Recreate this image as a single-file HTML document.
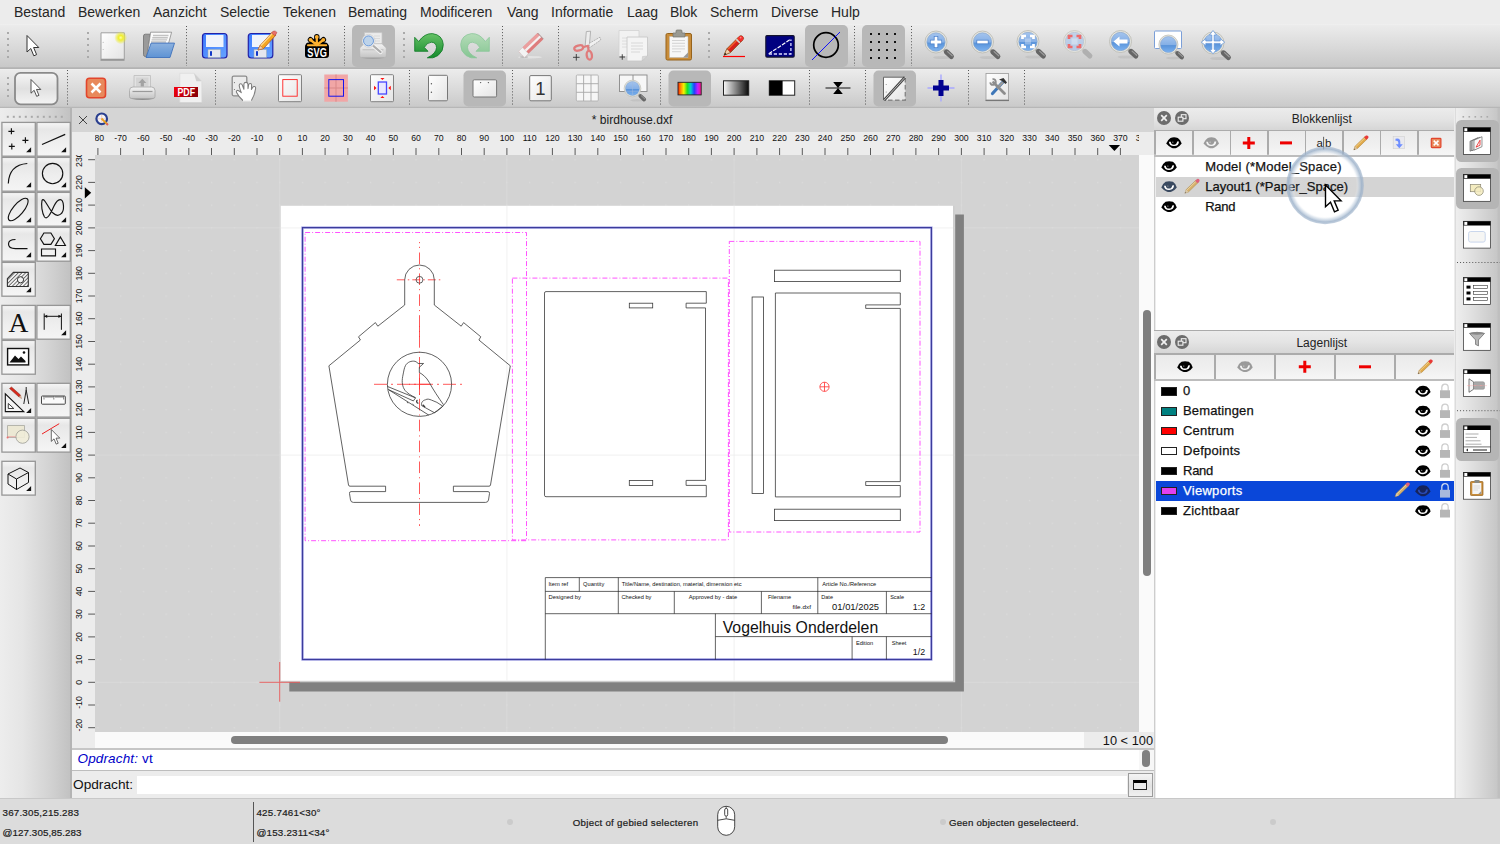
<!DOCTYPE html>
<html lang="nl">
<head>
<meta charset="utf-8">
<title>birdhouse.dxf</title>
<style>
html,body{margin:0;padding:0}
body{width:1500px;height:844px;position:relative;overflow:hidden;background:#ececec;font-family:"Liberation Sans",sans-serif;color:#222}
.abs{position:absolute}
#menubar{position:absolute;left:0;top:0;width:1500px;height:24px;background:#ececec}
#menubar span{position:absolute;top:3px;font-size:14px;line-height:19px;color:#262626;white-space:nowrap}
#tb1{position:absolute;left:0;top:24px;width:1500px;height:44.600px;background:linear-gradient(#f1f1f1 0,#ebebeb 1.200px,#e6e6e6 18%,#d8d8d8 55%,#c8c8c8 43.200px,#b3b3b3 43.600px,#b3b3b3 100%)}
#tb2{position:absolute;left:0;top:68.600px;width:1500px;height:39.400px;background:linear-gradient(#f0f0f0 0,#ebebeb 1.200px,#e6e6e6 18%,#d9d9d9 55%,#cacaca 37.400px,#b5b5b5 37.900px,#b8b8b8 100%)}
#tbline{display:none}
.chk{position:absolute;background:#b8b8b8;border-radius:5px}
.sepv{position:absolute;width:0;border-left:1px dotted #555}
.grip{position:absolute;width:2px;border-left:2px dotted #aaa}
svg{position:absolute;overflow:visible}
</style>
</head>
<body>
<div id="menubar">
<span style="left:14px">Bestand</span><span style="left:78px">Bewerken</span><span style="left:153px">Aanzicht</span><span style="left:220px">Selectie</span><span style="left:283px">Tekenen</span><span style="left:348px">Bemating</span><span style="left:420px">Modificeren</span><span style="left:507px">Vang</span><span style="left:551px">Informatie</span><span style="left:627px">Laag</span><span style="left:670px">Blok</span><span style="left:710px">Scherm</span><span style="left:771px">Diverse</span><span style="left:831px">Hulp</span>
</div>
<div id="tb1"></div>
<div id="tb2"></div>
<div id="tbline"></div>
<div class="chk" style="left:352px;top:25px;width:43px;height:42px"></div>
<div class="chk" style="left:805px;top:25px;width:43px;height:42px"></div>
<div class="chk" style="left:862px;top:25px;width:43px;height:42px"></div>
<svg id="tbsvg" style="left:0;top:0" width="1500" height="108" viewBox="0 0 1500 108">
<defs>
<linearGradient id="gLens" x1="0" y1="0" x2="0" y2="1"><stop offset="0" stop-color="#a4c4ee"/><stop offset="0.500" stop-color="#86b0e6"/><stop offset="0.560" stop-color="#5a94da"/><stop offset="1" stop-color="#7cb2f0"/></linearGradient>
<linearGradient id="gLensL" x1="0" y1="0" x2="0" y2="1"><stop offset="0" stop-color="#c2d3ea"/><stop offset="1" stop-color="#b5c9e6"/></linearGradient>
<linearGradient id="gPaper" x1="0" y1="0" x2="1" y2="1"><stop offset="0" stop-color="#ffffff"/><stop offset="1" stop-color="#e4e4e4"/></linearGradient>
<linearGradient id="gFolder" x1="0" y1="0" x2="0" y2="1"><stop offset="0" stop-color="#8db2df"/><stop offset="1" stop-color="#5e93d4"/></linearGradient>
<linearGradient id="gFloppy" x1="0" y1="0" x2="1" y2="1"><stop offset="0" stop-color="#3d7bff"/><stop offset="1" stop-color="#66a3ff"/></linearGradient>
<linearGradient id="gGreen" x1="0" y1="0" x2="0" y2="1"><stop offset="0" stop-color="#66c266"/><stop offset="1" stop-color="#148a2c"/></linearGradient>
<linearGradient id="gGreenL" x1="0" y1="0" x2="0" y2="1"><stop offset="0" stop-color="#b5dcb8"/><stop offset="1" stop-color="#84c592"/></linearGradient>
<linearGradient id="gPrinter" x1="0" y1="0" x2="0" y2="1"><stop offset="0" stop-color="#f4f4f4"/><stop offset="1" stop-color="#c4c4c4"/></linearGradient>
<linearGradient id="gBtn" x1="0" y1="0" x2="0" y2="1"><stop offset="0" stop-color="#f6f6f6"/><stop offset="0.5" stop-color="#e0e0e0"/><stop offset="1" stop-color="#f4f4f4"/></linearGradient>
<radialGradient id="gGlow"><stop offset="0" stop-color="#ffffa0"/><stop offset="0.35" stop-color="#f0ee30"/><stop offset="1" stop-color="#e8e820" stop-opacity="0"/></radialGradient>
<g id="mag"><ellipse cx="6" cy="15.500" rx="9" ry="1.600" fill="#000" opacity="0.060"/><path d="M7.500,7.500 L10,9.800" stroke="#a8a8a4" stroke-width="3"/><path d="M10.600,10 L15.300,14.400" stroke="#666666" stroke-width="5.200" stroke-linecap="round"/><path d="M11.600,9.600 L16.200,13.800" stroke="#9c9c9c" stroke-width="1.200" stroke-linecap="round"/><circle r="11" fill="#e6e6e0" stroke="#b8b8b0" stroke-width="0.800"/><circle r="9.200" fill="url(#gLens)" stroke="#7f9fc8" stroke-width="0.600"/></g>
<g id="magL"><path d="M7.500,7.500 L10,9.800" stroke="#c8c8c4" stroke-width="3"/><path d="M10.600,10 L15.300,14.400" stroke="#b0b0b0" stroke-width="5.200" stroke-linecap="round"/><circle r="11" fill="#e4e4e0" stroke="#c6c6c0" stroke-width="0.800"/><circle r="9.200" fill="url(#gLensL)" stroke="#b0bccd" stroke-width="0.600"/></g>
<path id="cursor" d="M0,0 L0,16.5 L3.8,13 L6.8,20.3 L9.6,19.1 L6.6,12 L11.8,12 Z" fill="#fff" stroke="#333" stroke-width="1" stroke-linejoin="miter"/>
</defs>
<!-- grips row1 -->
<g fill="#aaa">
<rect x="7" y="32" width="2" height="2"/><rect x="7" y="38" width="2" height="2"/><rect x="7" y="44" width="2" height="2"/><rect x="7" y="50" width="2" height="2"/><rect x="7" y="56" width="2" height="2"/>
<rect x="87" y="32" width="2" height="2"/><rect x="87" y="38" width="2" height="2"/><rect x="87" y="44" width="2" height="2"/><rect x="87" y="50" width="2" height="2"/><rect x="87" y="56" width="2" height="2"/>
<rect x="403" y="32" width="2" height="2"/><rect x="403" y="38" width="2" height="2"/><rect x="403" y="44" width="2" height="2"/><rect x="403" y="50" width="2" height="2"/><rect x="403" y="56" width="2" height="2"/>
<rect x="708" y="32" width="2" height="2"/><rect x="708" y="38" width="2" height="2"/><rect x="708" y="44" width="2" height="2"/><rect x="708" y="50" width="2" height="2"/><rect x="708" y="56" width="2" height="2"/>
</g>
<!-- dotted separators row1 -->
<g stroke="#555" stroke-width="1" stroke-dasharray="1 2.05">
<path d="M186.5,26V66M288.5,26V66M344.5,26V66M502.5,26V66M558.5,26V66M854.5,26V66M911.5,26V66"/>
</g>
<!-- cursor -->
<use href="#cursor" x="27" y="35.5"/>
<!-- new doc -->
<g>
<path d="M101,32.800 h23.300 v26.400 h-23.300z" fill="url(#gPaper)" stroke="#a0a0a0" stroke-width="1"/>
<path d="M100.5,60 h24" stroke="#8d8d8d" stroke-width="1.4"/>
<circle cx="103.2" cy="42.3" r="0.6" fill="#bbb"/><circle cx="103.2" cy="49.5" r="0.6" fill="#bbb"/>
<circle cx="120.7" cy="37.7" r="6.5" fill="url(#gGlow)"/>
</g>
<!-- open folder -->
<g>
<path d="M143.500,36 q0,-1.800 1.800,-1.800 h5 l-3.500,22.300 h-1.500 q-1.800,0 -1.800,-1.800z" fill="#9a9a9a" stroke="#707070" stroke-width="0.800"/>
<path d="M150.600,32.200 h21 l-3,11 l-21.500,13.300z" fill="#fbfbfb" stroke="#8a8a8a" stroke-width="0.800" stroke-linejoin="round"/>
<path d="M153,35.500 h15.500 M152.300,37.700 h15.500 M151.600,39.900 h15.500 M151,42 h15" stroke="#c2c2c2" stroke-width="1.400"/>
<path d="M151.100,43.100 h23.400 l-4.500,14.400 h-24z" fill="url(#gFolder)" stroke="#3f72bb" stroke-width="0.900" stroke-linejoin="round"/>
</g>
<!-- save -->
<g id="floppy">
<rect x="202.500" y="33.500" width="24.500" height="24.500" rx="3" fill="url(#gFloppy)" stroke="#2222a8" stroke-width="1.2"/>
<path d="M206,35 h17.500 v12 h-17.500z" fill="#f0f4fb"/>
<path d="M208,49.500 h12.500 v8 h-12.500z" fill="#e4e6ee" stroke="#9aa" stroke-width="0.5"/>
<rect x="210" y="51.200" width="2" height="4.600" fill="#1238c8"/>
</g>
<!-- save as -->
<g>
<rect x="248.300" y="33.500" width="24.500" height="24.500" rx="3" fill="url(#gFloppy)" stroke="#2222a8" stroke-width="1.2"/>
<path d="M252,35 h17.500 v12 h-17.500z" fill="#f0f4fb"/>
<path d="M254,49.500 h12.500 v8 h-12.500z" fill="#e4e6ee" stroke="#9aa" stroke-width="0.5"/>
<rect x="256" y="51.200" width="2" height="4.600" fill="#1238c8"/>
<path d="M258,50 L260,45.500 L272.500,32 L276,35 L263.500,48.500 Z" fill="#f5a623" stroke="#b0581a" stroke-width="0.8"/>
<path d="M260.800,45.800 L272.800,33 " stroke="#ffd98a" stroke-width="1.300"/>
<path d="M258,50 L260,45.500 L263.500,48.500Z" fill="#f3d2b0" stroke="#b0581a" stroke-width="0.5"/>
<path d="M271.500,33 L273.500,31 Q275.500,30.500 277,32.500 L275,35.800Z" fill="#e8706a" stroke="#b0403a" stroke-width="0.5"/>
</g>
<!-- SVG -->
<g>
<g stroke="#000" stroke-width="5.400" stroke-linecap="round"><path d="M316.800,45.500 L316.800,36.800 M316.800,45.500 L310.400,39.700 M316.800,45.500 L323.400,39.700 M316.800,45.300 L308.500,45.300 M316.800,45.300 L325.300,45.300"/></g>
<rect x="305" y="43.700" width="24" height="14.300" rx="3.200" fill="#000"/>
<g stroke="#fdb02e" stroke-width="2.300" stroke-linecap="round"><path d="M316.800,45 L316.800,37.800 M316.800,45 L311.300,40.500 M316.800,45 L322.500,40.500"/></g>
<circle cx="316.800" cy="36.900" r="1.900" fill="#fdb02e"/><circle cx="310.500" cy="39.800" r="1.900" fill="#fdb02e"/><circle cx="323.300" cy="39.800" r="1.900" fill="#fdb02e"/>
<rect x="307" y="44.200" width="20.200" height="2.100" rx="1" fill="#fdb02e"/>
<text x="317.100" y="56.900" font-family="Liberation Sans, sans-serif" font-weight="bold" font-size="12.900" fill="#fff" text-anchor="middle" textLength="19.500" lengthAdjust="spacingAndGlyphs">SVG</text>
</g>
<!-- print preview -->
<g>
<path d="M364.500,32.600 h17.500 v13 h-17.500z" fill="#ececec" stroke="#c6c6c6" stroke-width="0.700"/>
<path d="M374,36 h6 M374,38.500 h6 M374,41 h6" stroke="#dadada" stroke-width="1.200"/>
<path d="M359.700,48 l4.300,-4.300 h18 l4.300,4.300 v8 q0,1.600 -1.600,1.600 h-23.400 q-1.600,0 -1.600,-1.600z" fill="url(#gPrinter)" stroke="#b2b2b2" stroke-width="0.700"/>
<path d="M362.500,49.800 h21" stroke="#bdbdbd" stroke-width="1"/>
<path d="M361,57.700 h24 q-12,2.400 -24,0z" fill="#a2a2a2"/>
<path d="M373.500,46 L380.500,52" stroke="#f4f4f4" stroke-width="4.200" stroke-linecap="round"/>
<path d="M373.500,46 L380.500,52" stroke="#adadad" stroke-width="2.300" stroke-linecap="round"/>
<circle cx="368.500" cy="40.900" r="6.500" fill="#f2f2f2" stroke="#bcbcbc" stroke-width="0.500"/>
<circle cx="368.500" cy="40.900" r="5" fill="#bdd3ea" stroke="#5d90d6" stroke-width="0.900"/>
</g>
<!-- undo -->
<g>
<path d="M414.7,37.3 L414.7,51.3 L428,51.3 L424.3,47.4 Q427,42.3 431.5,42.2 Q436.3,42.5 436.5,47.5 Q436.3,53.5 427.3,57.8 Q433,59 438,55.5 Q443.6,51 443.3,44.5 Q442.5,35 432.5,33.6 Q424.5,33.2 418.7,41.5 Z" fill="url(#gGreen)" stroke="#0e7a24" stroke-width="0.8" stroke-linejoin="round"/>
</g>
<!-- redo (disabled) -->
<g>
<path d="M 489.3,37.3 L 489.3,51.3 L 476.0,51.3 L 479.7,47.4 Q 477.0,42.3 472.5,42.2 Q 467.7,42.5 467.5,47.5 Q 467.7,53.5 476.7,57.8 Q 471.0,59 466.0,55.5 Q 460.4,51 460.7,44.5 Q 461.5,35 471.5,33.6 Q 479.5,33.2 485.3,41.5 Z" fill="url(#gGreenL)" stroke="#8cc79a" stroke-width="0.8" stroke-linejoin="round"/>
</g>
<!-- eraser (disabled) -->
<g>
<ellipse cx="530" cy="57.200" rx="12" ry="1.200" fill="#e2e2e2"/>
<ellipse cx="524" cy="57" rx="4" ry="1" fill="#bdbdbd"/>
<g transform="rotate(-44 531 45.200)">
<rect x="517.800" y="41" width="26.400" height="8.500" rx="0.800" fill="#de7c7c"/>
<rect x="517.800" y="41" width="26.400" height="3.100" fill="#eb9e9e"/>
<rect x="517.800" y="44.100" width="26.400" height="2.300" fill="#f4f1f1"/>
<rect x="517.800" y="41" width="5.400" height="8.500" fill="#f3f3f3" stroke="#cfcfcf" stroke-width="0.500"/>
<path d="M544.200,41 v8.500" stroke="#9a8a8a" stroke-width="0.800"/>
</g>
</g>
<!-- scissors (cut) -->
<g>
<path d="M585.200,46 L586.300,31.600 L590.600,31.200 L589.200,47z" fill="#ededed" stroke="#9c9c9c" stroke-width="0.700"/>
<path d="M589,43.500 L600,37.200 L600.800,40 L589.400,47.800z" fill="#f1f1f1" stroke="#9c9c9c" stroke-width="0.700" stroke-dasharray="2 0.800"/>
<path d="M583,47.200 L588,45.800 L588.600,51" fill="none" stroke="#e07c7c" stroke-width="2.200" stroke-linejoin="round"/>
<ellipse cx="578.700" cy="48" rx="4.500" ry="2.500" transform="rotate(-15 578.700 48)" fill="none" stroke="#e07c7c" stroke-width="2.300"/>
<ellipse cx="589.300" cy="55.300" rx="2.600" ry="4.400" transform="rotate(-8 589.300 55.300)" fill="none" stroke="#e07c7c" stroke-width="2.300"/>
<path d="M573,57.300 h6.600 M576.300,54 v6.600" stroke="#333" stroke-width="0.900"/>
</g>
<!-- copy (disabled-ish) -->
<g>
<path d="M619,30.500 h20 v26 h-20z" fill="#f2f2f2" stroke="#d2d2d2" stroke-width="0.800"/>
<path d="M622,38 h10M622,41 h10M622,44 h10M622,47 h10" stroke="#d8d8d8" stroke-width="0.800"/>
<path d="M627,37 h20.500 v19 l-5.500,5 h-15z" fill="#f4f4f4" stroke="#c8c8c8" stroke-width="0.900"/>
<path d="M642,61 l0.500,-4.500 l5,-0.500z" fill="#d8d8d8" stroke="#c0c0c0" stroke-width="0.500"/>
<path d="M631,43 h12M631,46 h12M631,49 h12M631,52 h9" stroke="#d5d5d5" stroke-width="0.900"/>
<path d="M619.500,57 h5.500 M622.250,54.250 v5.500" stroke="#333" stroke-width="0.900"/>
</g>
<!-- paste -->
<g>
<rect x="666" y="33.500" width="25.500" height="26.500" rx="1.500" fill="#c98d3a" stroke="#96631c" stroke-width="1"/>
<path d="M669.500,36.500 h18.500 v21 h-18.500z" fill="#f7f7f7" stroke="#b9b9b9" stroke-width="0.500"/>
<path d="M672,40.500 h13M672,43.300 h13M672,46.100 h13M672,48.900 h13M672,51.700 h9" stroke="#cfcfcf" stroke-width="0.900"/>
<path d="M683,57.500 l5,-5 v5z" fill="#9a9a9a"/>
<path d="M673,33 h3 v-2 q0,-1 1,-1 h4 q1,0 1,1 v2 h3 v4 h-12z" fill="#9a9a92" stroke="#77776f" stroke-width="0.700"/>
</g>
<!-- pencil draw -->
<g>
<path d="M723,56.500 h22" stroke="#ff0000" stroke-width="1.200"/>
<path d="M724.100,55.200 L726.900,48.800 L739.200,36.400 A2.550,2.550 0 0 1 742.800,40 L730.500,52.400 Z" fill="#d9201c" stroke="#7a4a14" stroke-width="0.800" stroke-linejoin="round"/>
<path d="M728.100,49 L739.300,37.700" stroke="#f0602c" stroke-width="1.500"/>
<path d="M724.100,55.200 L726.900,48.800 L730.500,52.400Z" fill="#f3d0ac" stroke="#7a4a14" stroke-width="0.500"/>
<path d="M724.100,55.200 L725.100,52.800 L726.500,54.200z" fill="#111"/>
<path d="M736.300,39.300 L739.900,42.900" stroke="#d4d4d4" stroke-width="1.600"/>
<path d="M739.200,36.400 A2.550,2.550 0 0 1 742.800,40 L741.200,41.600 L737.600,38z" fill="#f23030"/>
<circle cx="740.600" cy="37.600" r="0.900" fill="#ff8a80"/>
</g>
<!-- dark blue draft -->
<g>
<rect x="765.800" y="35.600" width="28.400" height="21.500" rx="1.200" fill="#000080" stroke="#14142e" stroke-width="1.100"/>
<path d="M768.800,53.800 L790.900,39" stroke="#fff" stroke-width="1.200" stroke-dasharray="4 1.300"/>
<path d="M768.800,54 H790.900 V39.500" stroke="#dcdcff" stroke-width="1.300" stroke-dasharray="3.200 1.800" fill="none"/>
</g>
<!-- circle / linewidth -->
<g>
<circle cx="826" cy="45" r="12.300" fill="none" stroke="#000" stroke-width="1.700"/>
<path d="M812,60 L840,32" stroke="#0000ff" stroke-width="0.900"/>
</g>
<!-- grid -->
<g fill="#111">
<rect x="870" y="33" width="2" height="2"/><rect x="878" y="33" width="2" height="2"/><rect x="886" y="33" width="2" height="2"/><rect x="894" y="33" width="2" height="2"/>
<rect x="870" y="41" width="2" height="2"/><rect x="878" y="41" width="2" height="2"/><rect x="886" y="41" width="2" height="2"/><rect x="894" y="41" width="2" height="2"/>
<rect x="870" y="49" width="2" height="2"/><rect x="878" y="49" width="2" height="2"/><rect x="886" y="49" width="2" height="2"/><rect x="894" y="49" width="2" height="2"/>
<rect x="870" y="57" width="2" height="2"/><rect x="878" y="57" width="2" height="2"/><rect x="886" y="57" width="2" height="2"/><rect x="894" y="57" width="2" height="2"/>
</g>
<!-- zoom icons -->
<use href="#mag" x="936" y="42"/>
<path d="M930,42 h12 M936,36 v12" stroke="#4a80cc" stroke-width="4.400"/><path d="M930.700,42 h10.600 M936,36.700 v10.600" stroke="#fff" stroke-width="2.800"/>
<use href="#mag" x="982.500" y="42"/>
<path d="M976.500,42 h12" stroke="#4a80cc" stroke-width="4.400"/><path d="M977.200,42 h10.600" stroke="#fff" stroke-width="2.800"/>
<use href="#mag" x="1028" y="41.500"/>
<path d="M1022.500,39 v-3 h3.500 M1030,36 h3.500 v3 M1033.500,44 v3 h-3.500 M1026,47 h-3.500 v-3" stroke="#fff" stroke-width="2.700" fill="none"/><rect x="1025" y="38.500" width="6" height="6" fill="#fff" opacity="0.300"/>
<use href="#magL" x="1074.500" y="41.500"/>
<path d="M1069,39 v-3 h3.500 M1076.500,36 h3.500 v3 M1080,44 v3 h-3.500 M1072.500,47 h-3.500 v-3" stroke="#ee6a6a" stroke-width="2.700" fill="none"/><rect x="1071.500" y="38.500" width="6" height="6" fill="#fff" opacity="0.300"/>
<use href="#mag" x="1120.500" y="41.500"/>
<path d="M1113.500,41.500 l6,-5 v3 h8 v4 h-8 v3z" fill="#fff"/>
<rect x="1154.500" y="31" width="27" height="17.500" rx="1" fill="#fff" stroke="#7b9fd8" stroke-width="1"/>
<g transform="translate(1168.400 44.600) scale(0.870)"><use href="#mag"/></g>
<use href="#mag" x="1213" y="43"/>
<path d="M1213,30.500 l3.500,4.500 h-2.300 v6 h6 v-2.300 l4.500,3.500 l-4.500,3.500 v-2.300 h-6 v6 h2.300 l-3.500,4.500 l-3.500,-4.500 h2.300 v-6 h-6 v2.300 l-4.500,-3.500 l4.500,-3.500 v2.300 h6 v-6 h-2.300z" fill="#fff" stroke="#5b8fd6" stroke-width="0.700"/>
<!-- toolbar row 2 (continues inside tbsvg) -->
<g fill="#aaa">
<rect x="7" y="77" width="2" height="2"/><rect x="7" y="83" width="2" height="2"/><rect x="7" y="89" width="2" height="2"/><rect x="7" y="95" width="2" height="2"/>
</g>
<g stroke="#555" stroke-width="1" stroke-dasharray="1 2.05">
<path d="M67.500,70V105M215.500,70V105M409.500,70V105M512.500,70V105M660.500,70V105M809.500,70V105M865.500,70V105M968.500,70V105M1024.500,70V105"/>
</g>
<!-- select button -->
<rect x="15" y="72.800" width="42.500" height="31.500" rx="5.500" fill="url(#gBtn)" stroke="#8a8a8a" stroke-width="1.800"/>
<g transform="translate(31 79.500) scale(0.83)"><use href="#cursor"/></g>
<!-- red X -->
<rect x="86.500" y="78.200" width="19" height="19.500" rx="3" fill="#e8895c" stroke="#e2452c" stroke-width="1.600"/>
<path d="M91.500,83.500 l9,9 M100.500,83.500 l-9,9" stroke="#fff" stroke-width="2.600"/>
<!-- printer -->
<g>
<path d="M134,75.500 h16.500 v12 h-16.500z" fill="#e2e2e2" stroke="#bdbdbd" stroke-width="0.800"/>
<path d="M136,77.500 h12.500 v9 h-12.500z" fill="#d4d4d4"/>
<path d="M142.300,78.800 l4,4.200 h-2.400 v3.500 h-3.200 v-3.500 h-2.400z" fill="#a2a2a2"/>
<path d="M129.500,90.500 q0,-3.500 3.500,-3.500 h18.500 q3.500,0 3.500,3.500 v6 q0,2 -2,2 h-21.500 q-2,0 -2,-2z" fill="url(#gPrinter)" stroke="#a6a6a6" stroke-width="0.800"/>
<path d="M132.500,91.500 h20" stroke="#9a9a9a" stroke-width="1.200"/>
<path d="M130.500,98.700 h24 q-12,2.600 -24,0z" fill="#8e8e8e"/>
</g>
<!-- PDF -->
<g>
<defs><linearGradient id="gPdf" x1="0" y1="0" x2="1" y2="0.300"><stop offset="0" stop-color="#f4000c"/><stop offset="0.450" stop-color="#d0000c"/><stop offset="1" stop-color="#8e0008"/></linearGradient></defs>
<path d="M179.800,73.300 h14.200 l7.800,8 v21.300 h-22z" fill="#f0f0f0" stroke="#d6d6d6" stroke-width="0.600"/>
<path d="M179.500,103.200 h22.500" stroke="#c9c9c9" stroke-width="1"/>
<path d="M194,73.300 l7.800,8 h-5.500z" fill="#d0d0d0"/>
<rect x="174" y="87" width="24" height="10" fill="url(#gPdf)"/>
<text x="186.300" y="95.900" font-family="Liberation Sans, sans-serif" font-weight="bold" font-size="10.800" fill="#fff" text-anchor="middle" textLength="17.600" lengthAdjust="spacingAndGlyphs">PDF</text>
</g>
<!-- hand page -->
<g>
<rect x="232.200" y="76.100" width="14.600" height="19.700" rx="1.500" fill="#ebebeb" stroke="#8c8c8c" stroke-width="1.300"/>
<circle cx="234.400" cy="82.600" r="0.550" fill="#666"/><circle cx="234.400" cy="89.500" r="0.550" fill="#666"/>
<path d="M242.900,100.500 C240,98 238,95.500 236.600,92.500 C235.800,90.800 237.500,89.800 238.800,90.800 L241.300,92.600 C240.300,90 239.300,87 239.200,85.200 C239.400,83.300 241.800,83.200 242.300,85 L243.900,89.300 L243.900,84 C244.200,81.800 247.600,81.800 247.900,84 L248,88.600 L248.600,85 C249,83 251.600,83.200 251.600,85.200 L251.400,89.500 L252.600,87.500 C253.600,85.800 256,86.400 255.600,88.500 C255,93 253.500,97 251.400,100.500 Z" fill="#fff" stroke="#7c7c7c" stroke-width="1.050" stroke-linejoin="round"/>
<path d="M243,100.700 H251.300" stroke="#fff" stroke-width="1.200"/>
</g>
<!-- page w/ red rect -->
<rect x="278.500" y="74.700" width="23" height="27" rx="1" fill="url(#gPaper)" stroke="#777" stroke-width="0.900"/>
<rect x="282.800" y="79.600" width="14.400" height="16.600" fill="none" stroke="#ff2020" stroke-width="0.900"/>
<!-- pink quad -->
<rect x="324.300" y="74.500" width="23.600" height="27.200" fill="#f1a6a6"/>
<path d="M336,74.500 v27.200 M324.300,88 h23.600" stroke="#d98888" stroke-width="1"/>
<rect x="328.800" y="79.600" width="14.700" height="16.600" fill="none" stroke="#1414ee" stroke-width="1"/>
<!-- page w/ blue rect + arrows -->
<rect x="370.500" y="74.700" width="23" height="27" rx="1" fill="url(#gPaper)" stroke="#777" stroke-width="0.900"/>
<rect x="378.300" y="82" width="8.200" height="12" fill="#e8e8ff" stroke="#4848ff" stroke-width="1.300"/>
<path d="M380.300,78 h4.200 l-2.100,2.100z M380.300,98 h4.200 l-2.100,-2.100z M376.5,88 l-2.5,-2.2 v4.4z M388.3,88 l2.5,-2.2 v4.4z" fill="#ff1010"/>
<!-- portrait page -->
<rect x="428.500" y="75.300" width="19" height="25.500" rx="1.200" fill="url(#gPaper)" stroke="#777" stroke-width="1"/>
<circle cx="431.400" cy="83.700" r="0.700" fill="#555"/><circle cx="431.400" cy="92.300" r="0.700" fill="#555"/>
<!-- landscape page (checked) -->
<rect x="463.500" y="70.500" width="42.500" height="36" rx="5" fill="#b8b8b8"/>
<rect x="473" y="79.800" width="23.600" height="17.200" rx="1.200" fill="url(#gPaper)" stroke="#777" stroke-width="1"/>
<circle cx="480.600" cy="82.600" r="0.700" fill="#555"/><circle cx="488.400" cy="82.600" r="0.700" fill="#555"/>
<!-- "1" page -->
<rect x="529.700" y="75.600" width="21.600" height="25.200" rx="1.200" fill="url(#gPaper)" stroke="#777" stroke-width="1"/>
<text x="540.500" y="95.300" font-family="Liberation Sans, sans-serif" font-size="18.500" fill="#333" text-anchor="middle">1</text>
<!-- 3x3 grid -->
<rect x="576.300" y="75" width="22" height="26" rx="1" fill="#f6f6f6" stroke="#b0b0b0" stroke-width="0.900"/>
<path d="M583.600,75 v26 M591,75 v26 M576.300,83.700 h22 M576.300,92.300 h22" stroke="#a8a8a8" stroke-width="0.900"/>
<!-- two-pane magnifier -->
<rect x="619.500" y="75" width="27.500" height="16.500" fill="#f7f7f7" stroke="#888" stroke-width="0.900"/>
<path d="M633,75 v16.500" stroke="#888" stroke-width="0.900"/>
<g transform="translate(632.500 88.500) scale(0.760)"><use href="#mag"/></g>
<path d="M632.500,82 v13 M625.500,91.300 h14" stroke="#9fb9dd" stroke-width="0.500"/>
<!-- rainbow (checked) -->
<rect x="668.500" y="70.500" width="42.500" height="36" rx="5" fill="#b8b8b8"/>
<defs><linearGradient id="gRain" x1="0" y1="0" x2="1" y2="0"><stop offset="0" stop-color="#ff2000"/><stop offset="0.120" stop-color="#ff9000"/><stop offset="0.250" stop-color="#f4f400"/><stop offset="0.400" stop-color="#20e020"/><stop offset="0.550" stop-color="#00d0d0"/><stop offset="0.700" stop-color="#2040ff"/><stop offset="0.850" stop-color="#c020ff"/><stop offset="1" stop-color="#ff1080"/></linearGradient>
<linearGradient id="gGray" x1="0" y1="0" x2="1" y2="0"><stop offset="0" stop-color="#fafafa"/><stop offset="1" stop-color="#0a0a0a"/></linearGradient></defs>
<rect x="678" y="82.300" width="23.200" height="12.600" fill="url(#gRain)" stroke="#222" stroke-width="0.900"/>
<rect x="723.500" y="80.800" width="25.200" height="14.400" fill="url(#gGray)" stroke="#222" stroke-width="1"/>
<rect x="769.300" y="80.800" width="25.400" height="14.400" fill="#fff" stroke="#222" stroke-width="1"/>
<rect x="769.300" y="80.800" width="13.300" height="14.400" fill="#000"/>
<!-- hourglass-line -->
<path d="M825.500,88 h25" stroke="#333" stroke-width="1.200"/>
<path d="M833.200,82 h9.600 l-4.800,6z M833.200,94 h9.600 l-4.800,-6z" fill="#000"/>
<!-- draft (checked) -->
<rect x="873.500" y="70.500" width="42.500" height="36" rx="5" fill="#b8b8b8"/>
<path d="M883.500,77.200 h21.800 v23 h-21.800z" fill="url(#gPaper)"/>
<path d="M905,77.200 H883.500 V100.200" fill="none" stroke="#666" stroke-width="1"/>
<path d="M905.300,78 V100.200 H884" fill="none" stroke="#888" stroke-width="1.400" stroke-dasharray="4.500 2.500"/>
<path d="M884.300,100 L904.800,77.500" stroke="#444" stroke-width="2.600"/>
<path d="M884.300,100 L904.800,77.500" stroke="#ddd" stroke-width="0.800"/>
<circle cx="886.200" cy="84.500" r="0.500" fill="#777"/><circle cx="886.200" cy="92" r="0.500" fill="#777"/>
<!-- blue cross -->
<path d="M927.500,88 h27 M941,74.500 v27" stroke="#a8a8ff" stroke-width="1.400"/>
<path d="M933,88 h16 M941,80 v16" stroke="#000090" stroke-width="5"/>
<!-- tools -->
<rect x="986" y="73.500" width="22.500" height="26.500" fill="url(#gPaper)" stroke="#999" stroke-width="0.800"/>
<path d="M985.500,100.500 h23.500" stroke="#777" stroke-width="1.200"/>
<path d="M992.500,93.500 L1003,82" stroke="#3f77b8" stroke-width="3.200" stroke-linecap="round"/>
<path d="M997,88.500 L1003,82" stroke="#9a9a9a" stroke-width="2.400"/>
<path d="M999,79.500 l4.500,-1.500 l3.500,4.500 l-1.500,1.500 l-3.500,-3z" fill="#333"/>
<path d="M993.500,82.500 L1004.500,93.500" stroke="#8d8d8d" stroke-width="2.800" stroke-linecap="round"/>
<circle cx="993" cy="82" r="2.800" fill="none" stroke="#8d8d8d" stroke-width="1.800" stroke-dasharray="13 4.600" transform="rotate(-100 993 82)"/>
</svg>
<div id="leftpanel" style="position:absolute;left:0;top:108px;width:70px;height:690px;background:linear-gradient(to right,#ededed,#e5e5e5 32%,#d3d3d3 70%,#c2c2c2)"></div>
<div style="position:absolute;left:70px;top:108px;width:2px;height:690px;background:#b4b4b4"></div>
<svg id="ltsvg" style="left:0;top:0" width="72" height="800" viewBox="0 0 72 800">
<defs><linearGradient id="gTool" x1="0" y1="0" x2="0" y2="1"><stop offset="0" stop-color="#f6f6f6"/><stop offset="0.2" stop-color="#e7e7e7"/><stop offset="0.55" stop-color="#eeeeee"/><stop offset="1" stop-color="#f5f5f5"/></linearGradient></defs>
<g fill="#a8a8a8"><rect x="6.8" y="115.800" width="2" height="2"/><rect x="12.8" y="115.800" width="2" height="2"/><rect x="18.8" y="115.800" width="2" height="2"/><rect x="24.8" y="115.800" width="2" height="2"/><rect x="30.8" y="115.800" width="2" height="2"/><rect x="36.8" y="115.800" width="2" height="2"/><rect x="42.8" y="115.800" width="2" height="2"/><rect x="48.8" y="115.800" width="2" height="2"/><rect x="54.8" y="115.800" width="2" height="2"/><rect x="60.8" y="115.800" width="2" height="2"/></g>
<rect x="1.9" y="122.4" width="33.4" height="33.8" fill="url(#gTool)" stroke="#969696" stroke-width="1.300"/><path d="M31.1,147.2 v5 h-5z" fill="#111"/><rect x="36.9" y="122.4" width="33.4" height="33.8" fill="url(#gTool)" stroke="#969696" stroke-width="1.300"/><path d="M66.1,147.2 v5 h-5z" fill="#111"/>
<rect x="1.9" y="157.4" width="33.4" height="33.8" fill="url(#gTool)" stroke="#969696" stroke-width="1.300"/><path d="M31.1,182.2 v5 h-5z" fill="#111"/><rect x="36.9" y="157.4" width="33.4" height="33.8" fill="url(#gTool)" stroke="#969696" stroke-width="1.300"/><path d="M66.1,182.2 v5 h-5z" fill="#111"/>
<rect x="1.9" y="192.4" width="33.4" height="33.8" fill="url(#gTool)" stroke="#969696" stroke-width="1.300"/><path d="M31.1,217.2 v5 h-5z" fill="#111"/><rect x="36.9" y="192.4" width="33.4" height="33.8" fill="url(#gTool)" stroke="#969696" stroke-width="1.300"/><path d="M66.1,217.2 v5 h-5z" fill="#111"/>
<rect x="1.9" y="227.4" width="33.4" height="33.8" fill="url(#gTool)" stroke="#969696" stroke-width="1.300"/><path d="M31.1,252.2 v5 h-5z" fill="#111"/><rect x="36.9" y="227.4" width="33.4" height="33.8" fill="url(#gTool)" stroke="#969696" stroke-width="1.300"/><path d="M66.1,252.2 v5 h-5z" fill="#111"/>
<rect x="1.9" y="262.4" width="33.4" height="33.8" fill="url(#gTool)" stroke="#969696" stroke-width="1.300"/><path d="M31.1,287.2 v5 h-5z" fill="#111"/>
<rect x="1.9" y="305.4" width="33.4" height="33.8" fill="url(#gTool)" stroke="#969696" stroke-width="1.300"/><rect x="36.9" y="305.4" width="33.4" height="33.8" fill="url(#gTool)" stroke="#969696" stroke-width="1.300"/><path d="M66.1,330.2 v5 h-5z" fill="#111"/>
<rect x="1.9" y="340.4" width="33.4" height="33.8" fill="url(#gTool)" stroke="#969696" stroke-width="1.300"/>
<rect x="1.9" y="383.3" width="33.4" height="33.8" fill="url(#gTool)" stroke="#969696" stroke-width="1.300"/><path d="M31.1,408.1 v5 h-5z" fill="#111"/><rect x="36.9" y="383.3" width="33.4" height="33.8" fill="url(#gTool)" stroke="#969696" stroke-width="1.300"/>
<rect x="1.9" y="418.3" width="33.4" height="33.8" fill="url(#gTool)" stroke="#969696" stroke-width="1.300"/><rect x="36.9" y="418.3" width="33.4" height="33.8" fill="url(#gTool)" stroke="#969696" stroke-width="1.300"/><path d="M66.1,443.1 v5 h-5z" fill="#111"/>
<rect x="1.9" y="461.3" width="33.4" height="33.8" fill="url(#gTool)" stroke="#969696" stroke-width="1.300"/><path d="M31.1,486.1 v5 h-5z" fill="#111"/>
<!-- icons -->
<g stroke="#111" stroke-width="1.150" fill="none">
<path d="M8.400,131.300 h6 M11.400,128.300 v6 M22.400,140.300 h6 M25.400,137.300 v6 M8.800,146.400 h6 M11.800,143.400 v6"/>
<path d="M42,144.500 L65.200,134.400"/>
<path d="M8.300,183.500 Q9,165 27.300,163.500"/>
<circle cx="52.600" cy="173.500" r="10.200"/>
<ellipse cx="18.200" cy="209.500" rx="14" ry="5.300" transform="rotate(-50 18.200 209.500)"/>
<path d="M42,200.500 C44,196 49,210 53,213 C58,218 64,214 63.500,206 C63,197 58,198 54,206 C50,215 47,220 44.500,217 C42,213 41,205 42,200.500z"/>
<path d="M15.500,239.500 Q8.500,239.500 8.500,244 Q8.500,248.600 15.500,248.600 H27.500"/>
<path d="M43.900,233 h7 l3.500,5.700 l-3.500,5.700 h-7 l-3.500,-5.700z M60.400,237 l5,8.500 h-10z M41.500,249 h14 v6.800 h-14z"/>
</g>
<!-- hatch -->
<g>
<defs><pattern id="hat" width="2.600" height="2.600" patternUnits="userSpaceOnUse" patternTransform="rotate(-45)"><rect width="2.600" height="0.700" fill="#444"/></pattern></defs>
<path d="M13.300,272.400 H28.300 V286.500 H7.400 V278.600z" fill="#f2f2f2"/><path d="M13.300,272.400 H28.300 V286.500 H7.400 V278.600z" fill="url(#hat)" stroke="#333" stroke-width="1.100" stroke-linejoin="round"/>
<circle cx="20.500" cy="279.800" r="3.100" fill="#f2f2f2" stroke="#333" stroke-width="1"/>
</g>
<!-- A -->
<text x="18.500" y="331.500" font-family="Liberation Serif, serif" font-size="27.500" fill="#111" text-anchor="middle">A</text>
<!-- dim -->
<g stroke="#111" stroke-width="1" fill="none">
<path d="M44.200,313.500 V329.800 M61.400,313.500 V329.800 M44.200,316.300 H61.400"/>
<path d="M44.200,316.300 l3,-1.600 v3.200z M61.400,316.300 l-3,-1.600 v3.200z" fill="#111" stroke="none"/>
</g>
<!-- image -->
<rect x="7.600" y="348.500" width="21" height="16.400" fill="#fff" stroke="#111" stroke-width="1.400"/>
<path d="M9.500,362.500 l5.500,-7 l3.500,3.500 l2.500,-2.500 l4.500,4.500 v1.500z" fill="#111"/>
<circle cx="24" cy="352.500" r="1.300" fill="#111"/>
<!-- triangle pencil compass -->
<g>
<path d="M5.300,393.800 V411.600 H23.800z" fill="#f4f4f4" stroke="#111" stroke-width="1.100" stroke-linejoin="miter"/>
<path d="M8.300,403.500 v5 h5.500z" fill="#fff" stroke="#111" stroke-width="0.800"/>
<path d="M9.500,388.500 L11.500,387 L20.500,395 L19,397z" fill="#d8281c" stroke="#7a2a1a" stroke-width="0.500"/>
<path d="M19,397 L20.500,395 L21.500,398.500z" fill="#f1c9a0" stroke="#7a2a1a" stroke-width="0.300"/>
<path d="M26.200,387 V390 M26.200,390 L23.800,404 M26.200,390 L28.800,404" stroke="#222" stroke-width="1" fill="none"/>
</g>
<!-- ruler -->
<rect x="41.500" y="396" width="23.800" height="8.200" rx="0.800" fill="#fafafa" stroke="#333" stroke-width="0.900"/>
<path d="M44,396 v3.500 M46,396 v2 M48,396 v2 M50,396 v2 M52,396 v2 M53.800,396 v3.500 M56,396 v2 M58,396 v2 M60,396 v2 M62,396 v2 M63.600,396 v3.500" stroke="#333" stroke-width="0.600"/>
<!-- shape select -->
<rect x="7.600" y="425.600" width="16.800" height="11.800" fill="#ece8d4" stroke="#a8a8a0" stroke-width="0.800"/>
<circle cx="22.500" cy="436.700" r="6.600" fill="#efecd8" stroke="#9c9c94" stroke-width="0.800" fill-opacity="0.9"/>
<path d="M15.800,436.700 h-8.200" stroke="#e8a0a0" stroke-width="0.800"/>
<circle cx="7.600" cy="437.400" r="1" fill="#ee7070"/>
<!-- red line + cursor -->
<path d="M42,434 L59.200,423.700" stroke="#ee2222" stroke-width="1"/>
<g transform="translate(51.300 429.500) scale(0.720)"><use href="#cursor"/></g>
<!-- cube -->
<path d="M8,474 L20,468 L28.500,472.500 L16.500,479z M8,474 V484 L16.500,489.500 V479 M16.500,489.500 L28.500,482.500 V472.500" fill="none" stroke="#111" stroke-width="1" stroke-linejoin="round"/>
</svg>
<div style="position:absolute;left:72px;top:108px;width:1082px;height:24px;background:#d5d5d5"></div>
<div style="position:absolute;left:72px;top:132px;width:1082px;height:23px;background:#ececec"></div>
<div style="position:absolute;left:72px;top:155px;width:23px;height:593px;background:#ececec"></div>
<div style="position:absolute;left:95px;top:155px;width:1044px;height:577px;background:#d3d3d3"></div>
<div style="position:absolute;left:1139px;top:155px;width:15px;height:577px;background:#fafafa"></div>
<div style="position:absolute;left:95px;top:732px;width:989px;height:16px;background:#fafafa"></div>
<div style="position:absolute;left:1084px;top:732px;width:70px;height:16px;background:#ececec"></div>
<div style="position:absolute;left:1142.500px;top:310px;width:8.500px;height:266px;background:#7f7f7f;border-radius:4.500px"></div>
<div style="position:absolute;left:231px;top:736px;width:716.500px;height:8.200px;background:#7f7f7f;border-radius:4.500px"></div>
<div style="position:absolute;left:1084px;top:732px;width:69px;height:16px;font-size:12.800px;line-height:17px;text-align:right;color:#111;white-space:nowrap">10 &lt; 100</div>
<div style="position:absolute;left:591px;top:111px;width:82px;height:18px;font-size:12.100px;line-height:18px;text-align:center;color:#1a1a1a;white-space:nowrap">* birdhouse.dxf</div>
<svg id="cv" style="left:0;top:0" width="1160" height="750" viewBox="0 0 1160 750">
<defs><clipPath id="clipTop"><rect x="95" y="132" width="1044" height="23"/></clipPath><clipPath id="clipLeft"><rect x="72" y="155" width="23" height="577"/></clipPath><clipPath id="clipCv"><rect x="95" y="155" width="1044" height="577"/></clipPath><pattern id="gdots" x="279.10" y="681.70" width="22.722" height="22.722" patternUnits="userSpaceOnUse"><rect width="1.2" height="1.2" fill="#dcdcdc"/></pattern></defs>
<path d="M79,116 l8,8 M87,116 l-8,8" stroke="#444" stroke-width="1"/>
<g><circle cx="101.700" cy="118.800" r="5.300" fill="#f4f4f4" stroke="#2a3f8f" stroke-width="2.200"/><path d="M98,118.800 h7.400 M101.700,115 v7.600" stroke="#e8b0b0" stroke-width="0.600"/><path d="M101.500,118.500 L107.500,124.500" stroke="#e8a020" stroke-width="1.800"/><path d="M106.500,123.500 L108,125" stroke="#e06060" stroke-width="1.800"/></g>
<g clip-path="url(#clipTop)" font-family="Liberation Sans, sans-serif" font-size="8.700" fill="#111" text-anchor="middle">
<text x="97.9" y="140.900">-80</text><text x="120.6" y="140.900">-70</text><text x="143.4" y="140.900">-60</text><text x="166.1" y="140.900">-50</text><text x="188.8" y="140.900">-40</text><text x="211.5" y="140.900">-30</text><text x="234.3" y="140.900">-20</text><text x="257.0" y="140.900">-10</text><text x="279.7" y="140.900">0</text><text x="302.4" y="140.900">10</text><text x="325.1" y="140.900">20</text><text x="347.9" y="140.900">30</text><text x="370.6" y="140.900">40</text><text x="393.3" y="140.900">50</text><text x="416.0" y="140.900">60</text><text x="438.8" y="140.900">70</text><text x="461.5" y="140.900">80</text><text x="484.2" y="140.900">90</text><text x="506.9" y="140.900">100</text><text x="529.6" y="140.900">110</text><text x="552.4" y="140.900">120</text><text x="575.1" y="140.900">130</text><text x="597.8" y="140.900">140</text><text x="620.5" y="140.900">150</text><text x="643.3" y="140.900">160</text><text x="666.0" y="140.900">170</text><text x="688.7" y="140.900">180</text><text x="711.4" y="140.900">190</text><text x="734.1" y="140.900">200</text><text x="756.9" y="140.900">210</text><text x="779.6" y="140.900">220</text><text x="802.3" y="140.900">230</text><text x="825.0" y="140.900">240</text><text x="847.8" y="140.900">250</text><text x="870.5" y="140.900">260</text><text x="893.2" y="140.900">270</text><text x="915.9" y="140.900">280</text><text x="938.6" y="140.900">290</text><text x="961.4" y="140.900">300</text><text x="984.1" y="140.900">310</text><text x="1006.8" y="140.900">320</text><text x="1029.5" y="140.900">330</text><text x="1052.2" y="140.900">340</text><text x="1075.0" y="140.900">350</text><text x="1097.7" y="140.900">360</text><text x="1120.4" y="140.900">370</text><text x="1143.1" y="140.900">380</text>
<path d="M97.9,148V155M120.6,148V155M143.4,148V155M166.1,148V155M188.8,148V155M211.5,148V155M234.3,148V155M257.0,148V155M279.7,148V155M302.4,148V155M325.1,148V155M347.9,148V155M370.6,148V155M393.3,148V155M416.0,148V155M438.8,148V155M461.5,148V155M484.2,148V155M506.9,148V155M529.6,148V155M552.4,148V155M575.1,148V155M597.8,148V155M620.5,148V155M643.3,148V155M666.0,148V155M688.7,148V155M711.4,148V155M734.1,148V155M756.9,148V155M779.6,148V155M802.3,148V155M825.0,148V155M847.8,148V155M870.5,148V155M893.2,148V155M915.9,148V155M938.6,148V155M961.4,148V155M984.1,148V155M1006.8,148V155M1029.5,148V155M1052.2,148V155M1075.0,148V155M1097.7,148V155M1120.4,148V155M1143.1,148V155" stroke="#333" stroke-width="0.800"/>
</g>
<g clip-path="url(#clipLeft)" font-family="Liberation Sans, sans-serif" font-size="8.700" fill="#111" text-anchor="middle">
<text transform="translate(81.700 725.2) rotate(-90)">-20</text><text transform="translate(81.700 702.5) rotate(-90)">-10</text><text transform="translate(81.700 682.3) rotate(-90)">0</text><text transform="translate(81.700 659.6) rotate(-90)">10</text><text transform="translate(81.700 636.9) rotate(-90)">20</text><text transform="translate(81.700 614.1) rotate(-90)">30</text><text transform="translate(81.700 591.4) rotate(-90)">40</text><text transform="translate(81.700 568.7) rotate(-90)">50</text><text transform="translate(81.700 546.0) rotate(-90)">60</text><text transform="translate(81.700 523.2) rotate(-90)">70</text><text transform="translate(81.700 500.5) rotate(-90)">80</text><text transform="translate(81.700 477.8) rotate(-90)">90</text><text transform="translate(81.700 455.1) rotate(-90)">100</text><text transform="translate(81.700 432.4) rotate(-90)">110</text><text transform="translate(81.700 409.6) rotate(-90)">120</text><text transform="translate(81.700 386.9) rotate(-90)">130</text><text transform="translate(81.700 364.2) rotate(-90)">140</text><text transform="translate(81.700 341.5) rotate(-90)">150</text><text transform="translate(81.700 318.7) rotate(-90)">160</text><text transform="translate(81.700 296.0) rotate(-90)">170</text><text transform="translate(81.700 273.3) rotate(-90)">180</text><text transform="translate(81.700 250.6) rotate(-90)">190</text><text transform="translate(81.700 227.9) rotate(-90)">200</text><text transform="translate(81.700 205.1) rotate(-90)">210</text><text transform="translate(81.700 182.4) rotate(-90)">220</text><text transform="translate(81.700 159.7) rotate(-90)">230</text>
<path d="M88.200,727.7H95M88.200,705.0H95M88.200,682.3H95M88.200,659.6H95M88.200,636.9H95M88.200,614.1H95M88.200,591.4H95M88.200,568.7H95M88.200,546.0H95M88.200,523.2H95M88.200,500.5H95M88.200,477.8H95M88.200,455.1H95M88.200,432.4H95M88.200,409.6H95M88.200,386.9H95M88.200,364.2H95M88.200,341.5H95M88.200,318.7H95M88.200,296.0H95M88.200,273.3H95M88.200,250.6H95M88.200,227.9H95M88.200,205.1H95M88.200,182.4H95M88.200,159.7H95" stroke="#333" stroke-width="0.800"/>
</g>
<path d="M1108.700,145 h11.400 l-5.700,6z" fill="#000"/><path d="M84.800,187.200 v11.200 l6.400,-5.600z" fill="#000"/>
<g clip-path="url(#clipCv)">
<rect x="95" y="155" width="1044" height="577" fill="url(#gdots)"/>
<path d="M279.7,155V732M506.9,155V732M734.1,155V732M961.4,155V732M95,682.3H1139M95,455.1H1139M95,227.9H1139" stroke="#dbdbdb" stroke-width="0.800"/>
<path d="M955.200,214.600 H963.900 V691.400 H289.300 V682.300 H955.200z" fill="#808080"/>
<rect x="280.700" y="205.750" width="673.500" height="476" fill="#c9c9c9"/>
<rect x="280.700" y="205.750" width="672.400" height="475.050" fill="#ffffff"/>
<path d="M506.900,206V680.500M734.100,206V680.500M281,455.100H953M281,227.900H953" stroke="#ededed" stroke-width="0.800"/>
<!-- blue frame -->
<rect x="302.500" y="227.600" width="628.900" height="431.900" fill="none" stroke="#8a8ae8" stroke-width="2.600" opacity="0.550"/>
<rect x="302.500" y="227.600" width="628.900" height="431.900" fill="none" stroke="#3c3c9c" stroke-width="1.300"/>
<!-- viewports -->
<g fill="none" stroke="#ff40ff" stroke-width="0.900" stroke-dasharray="5 2 1 2">
<rect x="305.100" y="232.500" width="221.400" height="308.200"/>
<rect x="512.400" y="278.100" width="216" height="261.800"/>
<rect x="729.300" y="241.400" width="190.700" height="290.600"/>
</g>
<!-- centre lines -->
<g fill="none" stroke="#ff3030" stroke-width="0.800">
<path d="M419.500,242 V243.200 M419.500,246.800 V248 M419.500,326 V337"/><path d="M419.500,252.500 V526" stroke-dasharray="11.600 4.100 1.100 4.100"/>
<path d="M396.800,279.800 H442.300" stroke-dasharray="8 3 1.500 3"/>
<path d="M374,384.300 H465" stroke-dasharray="13 4 2 4"/>
<path d="M419.500,374 V395"/><path d="M409,384.300 H430"/>
<circle cx="824.500" cy="386.800" r="4.600"/><path d="M819.900,386.800 h9.200 M824.500,382.200 v9.200"/>
</g>
<!-- birdhouse front -->
<g fill="none" stroke="#3a3a3a" stroke-width="0.800" stroke-linejoin="round">
<path d="M404.700,305 V279.800 A14.800,14.800 0 0 1 434.300,279.800 V305 L461.200,326.200 L463.600,322.600 L480.800,336.800 L478.900,340 L510.300,365.800 L490.500,485 Q490.300,486.200 489,486.200 H453.400 V491.600 H488 Q489.800,491.700 489.500,493.500 L488.500,500 Q488,502.400 485.600,502.400 H353.400 Q351,502.400 350.500,500 L349.500,493.500 Q349.200,491.700 351,491.600 H385.600 V486.200 H350 Q348.700,486.200 348.500,485 L328.900,365.800 L360.400,340 L358.500,336.800 L375.400,322.600 L377.800,326.200 Z"/>
<circle cx="419.500" cy="279.800" r="3.400"/>
<circle cx="419.500" cy="384.300" r="32.100"/>
<g transform="translate(380 345) scale(0.09479)" stroke-width="8.500">
<path d="M78,437 L375,558 L352,590 L88,470"/>
<path d="M88,470 L515,740"/>
<path d="M375,555 C330,535 290,510 265,480 C235,440 228,390 240,330 C250,280 255,240 270,215 C290,180 330,165 370,172 C385,176 395,188 402,195 L460,195 L415,235 V290 C450,310 490,340 520,395 C560,470 620,560 670,630"/>
<path d="M440,640 C430,610 450,585 480,578 C500,565 520,572 545,582 L600,605 L662,645 L575,715 Z"/>
<path d="M395,580 C380,590 385,610 405,615 M450,630 L475,655" stroke-width="14"/>
<path d="M285,600 l10,15 M345,620 l8,10"/>
</g>
</g>
<!-- side panel (viewport 2) -->
<g fill="none" stroke="#3a3a3a" stroke-width="0.800">
<path d="M546,291.600 H706.300 V303.200 H686.100 V307.900 H705.500 V480.400 H686.100 V485.400 H706.300 V496.700 H546 Q544.500,496.700 544.500,495.200 V293.100 Q544.500,291.600 546,291.600z"/>
<rect x="629.300" y="303.200" width="23.400" height="4.700"/>
<rect x="629.300" y="480.400" width="23.400" height="5"/>
</g>
<!-- viewport 3 parts -->
<g fill="none" stroke="#3a3a3a" stroke-width="0.800">
<rect x="774.500" y="270.200" width="125.800" height="11.400"/>
<rect x="774.500" y="509.200" width="125.800" height="11.400"/>
<rect x="752.100" y="297" width="11.400" height="196.400"/>
<path d="M775.400,293 H900.300 V304.900 H865.700 V308.400 H900.300 V481.600 H865.700 V485.500 H900.300 V496.900 H775.400z"/>
</g>
<!-- title block -->
<g fill="none" stroke="#222" stroke-width="0.700">
<path d="M545.300,659.500 V577.600 H931.400"/>
<path d="M545.300,591.400 H931.400 M545.300,613.700 H931.400 M715.400,636.600 H931.400"/>
<path d="M579.300,577.600 V591.400 M618.300,577.600 V613.700 M817.800,577.600 V613.700 M674.300,591.400 V613.700 M761.400,591.400 V613.700 M886.400,591.400 V613.700 M715.400,613.700 V659.500 M852.100,636.600 V659.500 M886.400,636.600 V659.500"/>
</g>
<g font-family="Liberation Sans, sans-serif" fill="#111">
<g font-size="5.200">
<text x="548.500" y="586.400" textLength="19.700" lengthAdjust="spacingAndGlyphs">Item ref</text>
<text x="583.100" y="586.400" textLength="21.200" lengthAdjust="spacingAndGlyphs">Quantity</text>
<text x="621.800" y="586.400" textLength="119.700" lengthAdjust="spacingAndGlyphs">Title/Name, destination, material, dimension etc</text>
<text x="822.200" y="586.400" textLength="54" lengthAdjust="spacingAndGlyphs">Article No./Reference</text>
<text x="548.500" y="598.700" textLength="32.500" lengthAdjust="spacingAndGlyphs">Designed by</text>
<text x="621.500" y="598.700" textLength="29.900" lengthAdjust="spacingAndGlyphs">Checked by</text>
<text x="688.700" y="598.700" textLength="48.400" lengthAdjust="spacingAndGlyphs">Approved by - date</text>
<text x="767.900" y="598.900" textLength="23.200" lengthAdjust="spacingAndGlyphs">Filename</text>
<text x="821.300" y="598.900" textLength="11.700" lengthAdjust="spacingAndGlyphs">Date</text>
<text x="890.200" y="598.900" textLength="13.800" lengthAdjust="spacingAndGlyphs">Scale</text>
<text x="792.500" y="609" textLength="18.500" lengthAdjust="spacingAndGlyphs">file.dxf</text>
<text x="855.900" y="644.500" textLength="17.300" lengthAdjust="spacingAndGlyphs">Edition</text>
<text x="891.700" y="644.500" textLength="14.700" lengthAdjust="spacingAndGlyphs">Sheet</text>
</g>
<text x="832.100" y="609.900" font-size="9.800" textLength="47" lengthAdjust="spacingAndGlyphs">01/01/2025</text>
<text x="912.800" y="609.900" font-size="9.800" textLength="12.300" lengthAdjust="spacingAndGlyphs">1:2</text>
<text x="912.800" y="654.700" font-size="9.800" textLength="12.300" lengthAdjust="spacingAndGlyphs">1/2</text>
<text x="722.700" y="632.500" font-size="17" textLength="155.500" lengthAdjust="spacingAndGlyphs">Vogelhuis Onderdelen</text>
</g>
<!-- origin crosshair -->
<path d="M259.400,682.300 H300 M279.700,662 V701.700" stroke="#e85050" stroke-width="1" opacity="0.850"/>
</g>
</svg>
<!-- command area -->
<div style="position:absolute;left:72px;top:748px;width:1082px;height:2px;background:#c6c6c6"></div>
<div style="position:absolute;left:72px;top:750px;width:1081.500px;height:20px;background:#fff"></div>
<div style="position:absolute;left:1138.500px;top:750px;width:15px;height:20px;background:#f7f7f7"></div>
<div style="position:absolute;left:1142px;top:750.300px;width:8px;height:16.600px;background:#808080;border-radius:4px"></div>
<div style="position:absolute;left:72px;top:770px;width:1081.500px;height:1.300px;background:#bdbdbd"></div>
<div style="position:absolute;left:77.500px;top:750px;height:20px;font-size:13.500px;line-height:17px;color:#0000c8;white-space:nowrap;letter-spacing:0.150px"><i>Opdracht:</i> vt</div>
<div style="position:absolute;left:73px;top:775px;height:20px;font-size:13.700px;line-height:20px;color:#111;white-space:nowrap">Opdracht:</div>
<div style="position:absolute;left:137px;top:775.700px;width:990px;height:18.400px;background:#fff"></div>
<div style="position:absolute;left:1127.500px;top:772.500px;width:25px;height:24.500px;box-sizing:border-box;border:1px solid #9c9c9c;background:linear-gradient(#f4f4f4,#e2e2e2 55%,#f0f0f0)"></div>
<div style="position:absolute;left:1133px;top:780.200px;width:14px;height:10px;box-sizing:border-box;border:1px solid #222;border-top:3px solid #000;background:#ececec"></div>
<div style="position:absolute;left:1153.700px;top:108px;width:0.800px;height:690px;background:#cdcdcd"></div>
<div style="position:absolute;left:1154.2px;top:108px;width:300.2px;height:22.400px;background:linear-gradient(#ececec,#e4e4e4 50%,#d6d6d6)"></div>
<div style="position:absolute;left:1155.800px;top:109px;width:299px;height:20px;font-size:12px;line-height:20px;text-align:center;color:#222;text-indent:33px">Blokkenlijst</div>
<div style="position:absolute;left:1154.2px;top:130.400px;width:300.2px;height:26.300px;background:linear-gradient(#ababab 0,#ababab 24.400px,#bdbdbd 24.400px)"></div>
<div style="position:absolute;left:1155.500px;top:156.700px;width:298.900px;height:173.200px;background:#fff"></div>
<div style="position:absolute;left:1155.500px;top:177px;width:298.900px;height:20px;background:#d4d4d4"></div>
<div style="position:absolute;left:1156.0px;top:131.400px;width:36px;height:23.400px;background:linear-gradient(#eaeaea,#f0f0f0 60%,#f6f6f6)"></div><div style="position:absolute;left:1193.5px;top:131.400px;width:36px;height:23.400px;background:linear-gradient(#eaeaea,#f0f0f0 60%,#f6f6f6)"></div><div style="position:absolute;left:1231.0px;top:131.400px;width:36px;height:23.400px;background:linear-gradient(#eaeaea,#f0f0f0 60%,#f6f6f6)"></div><div style="position:absolute;left:1268.5px;top:131.400px;width:36px;height:23.400px;background:linear-gradient(#eaeaea,#f0f0f0 60%,#f6f6f6)"></div><div style="position:absolute;left:1306.0px;top:131.400px;width:36px;height:23.400px;background:linear-gradient(#eaeaea,#f0f0f0 60%,#f6f6f6)"></div><div style="position:absolute;left:1343.5px;top:131.400px;width:36px;height:23.400px;background:linear-gradient(#eaeaea,#f0f0f0 60%,#f6f6f6)"></div><div style="position:absolute;left:1381.0px;top:131.400px;width:36px;height:23.400px;background:linear-gradient(#eaeaea,#f0f0f0 60%,#f6f6f6)"></div><div style="position:absolute;left:1418.5px;top:131.400px;width:36px;height:23.400px;background:linear-gradient(#eaeaea,#f0f0f0 60%,#f6f6f6)"></div>
<div class="bl" style="position:absolute;left:1205.200px;top:157px;height:20px;font-size:13.0px;line-height:20px;color:#111;-webkit-text-stroke:0.250px #111;white-space:nowrap;letter-spacing:0.213px">Model (*Model_Space)</div><div class="bl" style="position:absolute;left:1205.200px;top:177px;height:20px;font-size:13.0px;line-height:20px;color:#111;-webkit-text-stroke:0.250px #111;white-space:nowrap;letter-spacing:0.028px">Layout1 (*Paper_Space)</div><div class="bl" style="position:absolute;left:1205.200px;top:197px;height:20px;font-size:13.0px;line-height:20px;color:#111;-webkit-text-stroke:0.250px #111;white-space:nowrap;letter-spacing:-0.250px">Rand</div>
<div style="position:absolute;left:1154.2px;top:329.900px;width:300.2px;height:1.400px;background:#ababab"></div>
<div style="position:absolute;left:1154.2px;top:331.300px;width:300.2px;height:22.100px;background:linear-gradient(#ececec,#e4e4e4 50%,#d6d6d6)"></div>
<div style="position:absolute;left:1155.800px;top:333px;width:299px;height:20px;font-size:12px;line-height:20px;text-align:center;color:#222;text-indent:33px">Lagenlijst</div>
<div style="position:absolute;left:1154.2px;top:353.400px;width:300.2px;height:27.200px;background:linear-gradient(#ababab 0,#ababab 25.600px,#bdbdbd 25.600px)"></div>
<div style="position:absolute;left:1155.500px;top:380.600px;width:298.900px;height:417.400px;background:#fff"></div>
<div style="position:absolute;left:1156.0px;top:354.800px;width:58.300px;height:24.200px;background:linear-gradient(#eaeaea,#f0f0f0 60%,#f6f6f6)"></div><div style="position:absolute;left:1215.9px;top:354.800px;width:58.300px;height:24.200px;background:linear-gradient(#eaeaea,#f0f0f0 60%,#f6f6f6)"></div><div style="position:absolute;left:1275.8px;top:354.800px;width:58.300px;height:24.200px;background:linear-gradient(#eaeaea,#f0f0f0 60%,#f6f6f6)"></div><div style="position:absolute;left:1335.7px;top:354.800px;width:58.300px;height:24.200px;background:linear-gradient(#eaeaea,#f0f0f0 60%,#f6f6f6)"></div><div style="position:absolute;left:1395.6px;top:354.800px;width:58.300px;height:24.200px;background:linear-gradient(#eaeaea,#f0f0f0 60%,#f6f6f6)"></div>
<div style="position:absolute;left:1155.500px;top:481px;width:298.900px;height:20px;background:#0a47d9"></div>
<div style="position:absolute;left:1161px;top:387.1px;width:16px;height:8.600px;box-sizing:border-box;border:1px solid #222;background:#000"></div><div style="position:absolute;left:1161px;top:407.0px;width:16px;height:8.600px;box-sizing:border-box;border:1px solid #222;background:#008080"></div><div style="position:absolute;left:1161px;top:426.9px;width:16px;height:8.600px;box-sizing:border-box;border:1px solid #222;background:#ff0000"></div><div style="position:absolute;left:1161px;top:446.8px;width:16px;height:8.600px;box-sizing:border-box;border:1px solid #222;background:#fff"></div><div style="position:absolute;left:1161px;top:466.7px;width:16px;height:8.600px;box-sizing:border-box;border:1px solid #222;background:#000"></div><div style="position:absolute;left:1161px;top:486.6px;width:16px;height:8.600px;box-sizing:border-box;border:1px solid #222;background:#e040f0"></div><div style="position:absolute;left:1161px;top:506.5px;width:16px;height:8.600px;box-sizing:border-box;border:1px solid #222;background:#000"></div>
<div style="position:absolute;left:1183px;top:381.3px;height:20px;font-size:13.0px;line-height:20px;color:#111;-webkit-text-stroke:0.250px #111;white-space:nowrap;letter-spacing:0.166px">0</div><div style="position:absolute;left:1183px;top:401.2px;height:20px;font-size:13.0px;line-height:20px;color:#111;-webkit-text-stroke:0.250px #111;white-space:nowrap;letter-spacing:0.141px">Bematingen</div><div style="position:absolute;left:1183px;top:421.1px;height:20px;font-size:13.0px;line-height:20px;color:#111;-webkit-text-stroke:0.250px #111;white-space:nowrap;letter-spacing:0.192px">Centrum</div><div style="position:absolute;left:1183px;top:441.0px;height:20px;font-size:13.0px;line-height:20px;color:#111;-webkit-text-stroke:0.250px #111;white-space:nowrap;letter-spacing:0.275px">Defpoints</div><div style="position:absolute;left:1183px;top:460.9px;height:20px;font-size:13.0px;line-height:20px;color:#111;-webkit-text-stroke:0.250px #111;white-space:nowrap;letter-spacing:-0.250px">Rand</div><div style="position:absolute;left:1183px;top:480.8px;height:20px;font-size:13.0px;line-height:20px;color:#fff;-webkit-text-stroke:0.250px #fff;white-space:nowrap;letter-spacing:0.295px">Viewports</div><div style="position:absolute;left:1183px;top:500.7px;height:20px;font-size:13.0px;line-height:20px;color:#111;-webkit-text-stroke:0.250px #111;white-space:nowrap;letter-spacing:0.266px">Zichtbaar</div>
<svg id="rpsvg" style="left:0;top:0" width="1500" height="844" viewBox="0 0 1500 844">
<defs>
<g id="eye"><path d="M-7.8,0.7 Q-6.5,-3 -3.5,-4.9 Q0,-6.2 3.8,-4.9 Q6.8,-3 7.7,0.7 Q5.5,3.7 2.8,4.9 Q0,5.9 -2.5,4.9 Q-5.5,3.4 -7.8,0.7z"/><path d="M-5.1,-1 A5.05,4.9 0 0 0 4.96,-1.4 L3.06,-1.3 A3.2,3.4 0 0 1 -3.3,-1 Z" fill="#fff"/><circle cx="-1.200" cy="-0.600" r="0.650" fill="#999"/></g>
<g id="lock"><path d="M-3.200,2.800 V-0.400 A3.200,3.400 0 0 1 3.200,-0.400 V2.800" fill="none" stroke-width="1.300"/><rect x="-5" y="2.300" width="10" height="7.800" stroke="none"/></g>
<g id="pencil"><path d="M0,0 L1.300,-3.600 L11.300,-13.300 L13.600,-11 L3.600,-1.300z" fill="#e0aa4c" stroke="#a87828" stroke-width="0.500"/><path d="M1.900,-3 L11.800,-12.600" stroke="#f4d48c" stroke-width="0.900"/><path d="M0,0 L1.300,-3.600 L3.600,-1.300z" fill="#d8c09c"/><path d="M0,0 L0.500,-1.300 L1.300,-0.500z" fill="#333"/><path d="M10.300,-12.300 L12.200,-14.200 Q13.600,-14.800 14.500,-13.500 Q15,-12.300 14.400,-11.700 L12.600,-10z" fill="#e83838"/></g>
<g id="pencilD"><path d="M0,0 L1.300,-3.600 L11.300,-13.300 L13.600,-11 L3.600,-1.300z" fill="#d6b06c" stroke="#a88a50" stroke-width="0.500"/><path d="M1.900,-3 L11.800,-12.600" stroke="#ecd6a4" stroke-width="0.900"/><path d="M0,0 L1.300,-3.600 L3.600,-1.300z" fill="#d8c8ac"/><path d="M0,0 L0.500,-1.300 L1.300,-0.500z" fill="#555"/><path d="M10.300,-12.300 L12.200,-14.200 Q13.600,-14.800 14.500,-13.500 Q15,-12.300 14.400,-11.700 L12.600,-10z" fill="#e0607a"/></g>
<g id="eyeS"><path d="M-7.8,0.7 Q-6.5,-3 -3.5,-4.9 Q0,-6.2 3.8,-4.9 Q6.8,-3 7.7,0.7 Q5.5,3.7 2.8,4.9 Q0,5.9 -2.5,4.9 Q-5.5,3.4 -7.8,0.7z" fill="#16245c"/><path d="M-5.1,-1 A5.05,4.9 0 0 0 4.96,-1.4 L3.06,-1.3 A3.2,3.4 0 0 1 -3.3,-1 Z" fill="#2a4cb8"/></g>
<g id="tbtn"><circle r="7" fill="#6c6c6c"/></g>
</defs>
<use href="#tbtn" x="1164" y="118"/><path d="M1161.200,115.2 l5.600,5.600 M1166.800,115.2 l-5.600,5.600" stroke="#f0f0f0" stroke-width="1.700"/><use href="#tbtn" x="1182" y="118"/><rect x="1181.300" y="114.7" width="4.700" height="4" fill="none" stroke="#f0f0f0" stroke-width="1.100"/><rect x="1178.200" y="117.2" width="4.700" height="4" fill="#6e6e6e" stroke="#f0f0f0" stroke-width="1.100"/>
<use href="#tbtn" x="1164" y="342"/><path d="M1161.200,339.2 l5.600,5.600 M1166.800,339.2 l-5.600,5.600" stroke="#f0f0f0" stroke-width="1.700"/><use href="#tbtn" x="1182" y="342"/><rect x="1181.300" y="338.7" width="4.700" height="4" fill="none" stroke="#f0f0f0" stroke-width="1.100"/><rect x="1178.200" y="341.2" width="4.700" height="4" fill="#6e6e6e" stroke="#f0f0f0" stroke-width="1.100"/>
<use href="#eye" x="1174" y="142.800" fill="#000"/>
<g opacity="0.350"><use href="#eye" x="1211.300" y="142.800" fill="#000"/></g>
<path d="M1242.800,142.900 h12 M1248.800,136.900 v12" stroke="#ee0000" stroke-width="3"/>
<path d="M1280,142.900 h12" stroke="#ee0000" stroke-width="3"/>
<text x="1316.500" y="147.300" font-family="Liberation Sans, sans-serif" font-size="11.500" fill="#222">a</text><text x="1325" y="147.300" font-family="Liberation Sans, sans-serif" font-size="11.500" fill="#222">b</text><path d="M1323.600,136.800 V149.500" stroke="#222" stroke-width="0.700"/>
<use href="#pencil" x="1353.800" y="149.800"/>
<rect x="1393.200" y="136.500" width="11.500" height="12.200" fill="#e9e9ee" stroke="#d0d0d0" stroke-width="0.600"/><path d="M1395.500,138.800 Q1400.500,137.500 1400.300,142.500 V144.200 H1402.800 L1399.300,148.200 L1395.800,144.200 H1398.300 V142.500 Q1398.300,140.300 1395.500,140.800z" fill="#6e8eff"/>
<rect x="1431.300" y="138.300" width="9.600" height="9.300" rx="0.800" fill="#e8895c" stroke="#e2452c" stroke-width="1.200"/><path d="M1433.700,140.600 l4.800,4.800 M1438.500,140.600 l-4.800,4.800" stroke="#fff" stroke-width="1.500"/>
<use href="#eye" x="1169.100" y="166.700" fill="#000"/>
<use href="#eye" x="1169.100" y="186.700" fill="#3a4a60"/>
<use href="#eye" x="1169.100" y="206.700" fill="#000"/>
<use href="#pencilD" x="1184.900" y="193.200"/>
<use href="#eye" x="1185" y="366.700" fill="#000"/>
<g opacity="0.350"><use href="#eye" x="1245" y="366.700" fill="#000"/></g>
<path d="M1298.800,366.800 h12 M1304.800,360.800 v12" stroke="#ee0000" stroke-width="3"/>
<path d="M1359,366.800 h12" stroke="#ee0000" stroke-width="3"/>
<use href="#pencil" x="1418" y="373.800"/>
<use href="#eye" x="1422.900" y="391.3" fill="#000"/><use href="#lock" x="1445" y="388.0" fill="#b6b6b6" stroke="#cfcfcf"/>
<use href="#eye" x="1422.900" y="411.2" fill="#000"/><use href="#lock" x="1445" y="407.9" fill="#b6b6b6" stroke="#cfcfcf"/>
<use href="#eye" x="1422.900" y="431.1" fill="#000"/><use href="#lock" x="1445" y="427.8" fill="#b6b6b6" stroke="#cfcfcf"/>
<use href="#eye" x="1422.900" y="451.0" fill="#000"/><use href="#lock" x="1445" y="447.7" fill="#b6b6b6" stroke="#cfcfcf"/>
<use href="#eye" x="1422.900" y="470.9" fill="#000"/><use href="#lock" x="1445" y="467.6" fill="#b6b6b6" stroke="#cfcfcf"/>
<use href="#eyeS" x="1422.900" y="490.8"/><use href="#lock" x="1445" y="487.5" fill="#a9b9dc" stroke="#c9d5ee"/><use href="#pencilD" x="1395.100" y="496.8"/>
<use href="#eye" x="1422.900" y="510.7" fill="#000"/><use href="#lock" x="1445" y="507.4" fill="#b6b6b6" stroke="#cfcfcf"/>
<defs><radialGradient id="gRing"><stop offset="0" stop-color="#fff" stop-opacity="0"/><stop offset="0.800" stop-color="#fff" stop-opacity="0.050"/><stop offset="0.860" stop-color="#c9d6e4" stop-opacity="0.500"/><stop offset="0.940" stop-color="#9db2ca" stop-opacity="0.850"/><stop offset="1" stop-color="#9db2ca" stop-opacity="0.600"/></radialGradient></defs>
<circle cx="1325.100" cy="185.400" r="38.800" fill="url(#gRing)"/>
<path d="M0,0 L0,16.500 L3.800,13 L6.800,20.300 L9.600,19.100 L6.600,12 L11.800,12 Z" transform="translate(1325.500 185) scale(1.320)" fill="#fff" stroke="#000" stroke-width="1.050" stroke-linejoin="miter"/>
</svg>
<div style="position:absolute;left:1455px;top:108px;width:45px;height:690px;background:linear-gradient(to right,#cfcfcf 0,#eeeeee 1.200px,#e3e3e3 30%,#c7c7c7 93%,#bfbfbf 96%)"></div>
<div style="position:absolute;left:1456.400px;top:120.4px;width:42.800px;height:41.8px;background:#b5b5b5;border-radius:5.500px"></div>
<div style="position:absolute;left:1456.400px;top:167.6px;width:42.800px;height:41.7px;background:#b5b5b5;border-radius:5.500px"></div>
<div style="position:absolute;left:1456.400px;top:417.8px;width:42.800px;height:43.2px;background:#b5b5b5;border-radius:5.500px"></div>
<svg id="frsvg" style="left:0;top:0" width="1500" height="844" viewBox="0 0 1500 844">
<g fill="#aaa"><rect x="1462.5" y="116" width="1.600" height="1.600"/><rect x="1468.5" y="116" width="1.600" height="1.600"/><rect x="1474.5" y="116" width="1.600" height="1.600"/><rect x="1480.5" y="116" width="1.600" height="1.600"/><rect x="1486.5" y="116" width="1.600" height="1.600"/></g>
<path d="M1457,262.500 H1500 M1457,410.700 H1500" stroke="#555" stroke-width="1" stroke-dasharray="1 2.050"/>
<rect x="1463.500" y="127.6" width="27" height="26.800" fill="#fff" stroke="#2a2a2a" stroke-width="0.700"/><rect x="1463.500" y="127.6" width="27" height="4.200" fill="#000"/><rect x="1464.300" y="128.2" width="3" height="3" fill="#fff"/>
<rect x="1463.500" y="174.5" width="27" height="26.800" fill="#fff" stroke="#2a2a2a" stroke-width="0.700"/><rect x="1463.500" y="174.5" width="27" height="4.200" fill="#000"/><rect x="1464.300" y="175.1" width="3" height="3" fill="#fff"/>
<rect x="1463.500" y="221.3" width="27" height="26.800" fill="#fff" stroke="#2a2a2a" stroke-width="0.700"/><rect x="1463.500" y="221.3" width="27" height="4.200" fill="#000"/><rect x="1464.300" y="221.9" width="3" height="3" fill="#fff"/>
<rect x="1463.500" y="277.6" width="27" height="26.800" fill="#fff" stroke="#2a2a2a" stroke-width="0.700"/><rect x="1463.500" y="277.6" width="27" height="4.200" fill="#000"/><rect x="1464.300" y="278.2" width="3" height="3" fill="#fff"/>
<rect x="1463.500" y="323.5" width="27" height="26.800" fill="#fff" stroke="#2a2a2a" stroke-width="0.700"/><rect x="1463.500" y="323.5" width="27" height="4.200" fill="#000"/><rect x="1464.300" y="324.1" width="3" height="3" fill="#fff"/>
<rect x="1463.500" y="369.7" width="27" height="26.800" fill="#fff" stroke="#2a2a2a" stroke-width="0.700"/><rect x="1463.500" y="369.7" width="27" height="4.200" fill="#000"/><rect x="1464.300" y="370.3" width="3" height="3" fill="#fff"/>
<rect x="1463.500" y="425.8" width="27" height="26.800" fill="#fff" stroke="#2a2a2a" stroke-width="0.700"/><rect x="1463.500" y="425.8" width="27" height="4.200" fill="#000"/><rect x="1464.300" y="426.4" width="3" height="3" fill="#fff"/>
<rect x="1463.500" y="472.4" width="27" height="26.800" fill="#fff" stroke="#2a2a2a" stroke-width="0.700"/><rect x="1463.500" y="472.4" width="27" height="4.200" fill="#000"/><rect x="1464.300" y="473.0" width="3" height="3" fill="#fff"/>
<path d="M1470,141.2 l8,-3.500 v10 l-8,3.500z" fill="#bbb" stroke="#555" stroke-width="0.600"/><path d="M1472,140.7 l8,-3.500 v10 l-8,3.500z" fill="#ddd" stroke="#555" stroke-width="0.600"/><path d="M1474,140.2 l8,-3.500 v10 l-8,3.500z" fill="#f8f8f8" stroke="#555" stroke-width="0.600"/><path d="M1476,147.2 l4,-7 v5z" fill="none" stroke="#ee2222" stroke-width="0.800"/>
<rect x="1470.300" y="184.5" width="10.400" height="7.200" fill="#f4ecc0" stroke="#8a8670" stroke-width="0.700"/><circle cx="1479" cy="191.1" r="4.300" fill="#f4ecc0" fill-opacity="0.850" stroke="#8a8670" stroke-width="0.700"/>
<rect x="1468.600" y="231.5" width="16.600" height="10.600" rx="2" fill="#f6f6f4" stroke="#c4d2ea" stroke-width="0.900"/>
<rect x="1466.500" y="285.6" width="4" height="3" fill="#000"/><rect x="1473.300" y="285.6" width="14" height="3" fill="#fff" stroke="#333" stroke-width="0.600"/><rect x="1466.500" y="291.5" width="4" height="3" fill="#000"/><rect x="1473.300" y="291.5" width="14" height="3" fill="#fff" stroke="#333" stroke-width="0.600"/><rect x="1466.500" y="297.4" width="4" height="3" fill="#000"/><rect x="1473.300" y="297.4" width="14" height="3" fill="#fff" stroke="#333" stroke-width="0.600"/>
<path d="M1469.500,333.40000000000003 q7.500,-2.200 15,0 l-6,6.500 v6 l-3,-1.500 v-4.500z" fill="#b8b8b8" stroke="#555" stroke-width="0.600"/><ellipse cx="1477" cy="333.40000000000003" rx="7.500" ry="1.300" fill="#888"/>
<path d="M1469,378.8 v13.500 l4.500,-3 v-7.500z" fill="#f4f4f4" stroke="#444" stroke-width="0.700"/><rect x="1473.500" y="381.8" width="11" height="7.500" rx="1.500" fill="#a8a8a8" stroke="#888" stroke-width="0.500"/><path d="M1467.500,385.6 h19" stroke="#f0a0a0" stroke-width="0.700" stroke-dasharray="3 1 1 1"/>
<g stroke="#777" stroke-width="0.600"><path d="M1465.500,434.0 h13 M1465.500,437.4 h11.500 M1465.500,440.79999999999995 h15 M1465.500,444.2 h16"/></g><path d="M1463.500,446.9 h27" stroke="#111" stroke-width="0.600"/><path d="M1473,450.0 h14" stroke="#444" stroke-width="1.200"/><path d="M1466,450.0 l2,-1.500 v3z" fill="#333"/>
<rect x="1470.500" y="481.5" width="12.500" height="14" rx="0.800" fill="#c98d3a" stroke="#96631c" stroke-width="0.700"/><rect x="1472.300" y="483" width="9" height="11" fill="#f4f4f4"/><path d="M1474.500,480 h5 v3 h-5z" fill="#8a8a82"/><path d="M1473.500,486 h6.500 M1473.500,488 h6.500 M1473.500,490 h4.500" stroke="#ccc" stroke-width="0.600"/><path d="M1478.300,494 l3,-3 v3z" fill="#999"/>
</svg>
<div style="position:absolute;left:0;top:798px;width:1500px;height:46px;background:#dcdcdc"></div>
<div style="position:absolute;left:0;top:797.500px;width:1500px;height:1px;background:#c8c8c8"></div>
<div style="position:absolute;left:2.5px;top:806.7px;font-size:9.8px;line-height:11.8px;color:#1a1a1a;-webkit-text-stroke:0.200px #1a1a1a;white-space:nowrap;letter-spacing:0.2px">367.305,215.283</div>
<div style="position:absolute;left:2.5px;top:827.0px;font-size:9.8px;line-height:11.8px;color:#1a1a1a;-webkit-text-stroke:0.200px #1a1a1a;white-space:nowrap;letter-spacing:0.07px">@127.305,85.283</div>
<div style="position:absolute;left:256.4px;top:806.7px;font-size:9.8px;line-height:11.8px;color:#1a1a1a;-webkit-text-stroke:0.200px #1a1a1a;white-space:nowrap;letter-spacing:0.25px">425.7461&lt;30°</div>
<div style="position:absolute;left:256.4px;top:827.0px;font-size:9.8px;line-height:11.8px;color:#1a1a1a;-webkit-text-stroke:0.200px #1a1a1a;white-space:nowrap;letter-spacing:0.2px">@153.2311&lt;34°</div>
<div style="position:absolute;left:572.8px;top:816.7px;font-size:9.7px;line-height:11.7px;color:#1a1a1a;-webkit-text-stroke:0.200px #1a1a1a;white-space:nowrap;letter-spacing:0.28px">Object of gebied selecteren</div>
<div style="position:absolute;left:949px;top:816.7px;font-size:9.7px;line-height:11.7px;color:#1a1a1a;-webkit-text-stroke:0.200px #1a1a1a;white-space:nowrap;letter-spacing:0.22px">Geen objecten geselecteerd.</div>
<div style="position:absolute;left:253.300px;top:802px;width:0.800px;height:40px;background:#555"></div>
<div style="position:absolute;left:506.5px;top:818.900px;width:6px;height:6px;border-radius:3px;background:#cbcbcb"></div><div style="position:absolute;left:940px;top:818.900px;width:6px;height:6px;border-radius:3px;background:#cbcbcb"></div><div style="position:absolute;left:1269.5px;top:818.900px;width:6px;height:6px;border-radius:3px;background:#cbcbcb"></div>
<svg style="left:715px;top:803px" width="24" height="36" viewBox="715 803 24 36"><rect x="717.700" y="806.300" width="17" height="29" rx="8.500" fill="#fff" stroke="#333" stroke-width="0.900"/><path d="M717.700,820.300 Q726.200,817.300 734.700,820.300" fill="none" stroke="#333" stroke-width="0.900"/><path d="M726.200,806.300 V808.400 M726.200,816.200 V818.600" stroke="#333" stroke-width="0.800"/><rect x="724.700" y="808.400" width="3" height="7.800" rx="1.500" fill="#fff" stroke="#333" stroke-width="0.900"/></svg>
</body>
</html>
